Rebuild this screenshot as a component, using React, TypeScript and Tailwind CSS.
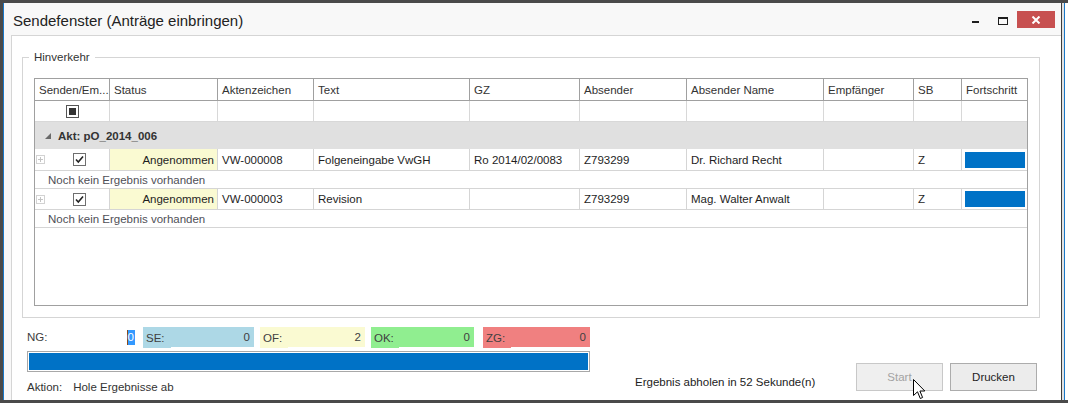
import React from "react";

const COLS =
  "grid grid-cols-[75px_108px_96px_156px_110px_107px_137px_90px_48px_65px]";

const headers = [
  "Senden/Em...",
  "Status",
  "Aktenzeichen",
  "Text",
  "GZ",
  "Absender",
  "Absender Name",
  "Empfänger",
  "SB",
  "Fortschritt",
];

type Row = {
  az: string;
  text: string;
  gz: string;
  abs: string;
  name: string;
  sb: string;
  h: string;
  barTop: string;
};

const rows: Row[] = [
  {
    az: "VW-000008",
    text: "Folgeneingabe VwGH",
    gz: "Ro 2014/02/0083",
    abs: "Z793299",
    name: "Dr. Richard Recht",
    sb: "Z",
    h: "h-[22px]",
    barTop: "pt-[3px]",
  },
  {
    az: "VW-000003",
    text: "Revision",
    gz: "",
    abs: "Z793299",
    name: "Mag. Walter Anwalt",
    sb: "Z",
    h: "h-[21px]",
    barTop: "pt-[2px]",
  },
];

function CheckBox() {
  return (
    <div className="w-[13px] h-[13px] border border-[#6f6f6f] bg-white flex items-center justify-center">
      <svg width="11" height="11" viewBox="0 0 11 11">
        <path d="M2 5.5 L4.3 8 L9 2.5" fill="none" stroke="#222" strokeWidth="1.6" />
      </svg>
    </div>
  );
}

function Expander() {
  return (
    <div className="w-[9px] h-[9px] border border-[#d2d2d2] flex items-center justify-center">
      <svg width="7" height="7" viewBox="0 0 7 7">
        <path d="M3.5 1 V6 M1 3.5 H6" stroke="#c4c4c4" strokeWidth="1" />
      </svg>
    </div>
  );
}

function Counter({
  label,
  value,
  bg,
  w,
  ml,
}: {
  label: string;
  value: string;
  bg: string;
  w: string;
  ml: string;
}) {
  return (
    <div className={`flex items-start h-[21px] ${w} ${ml}`}>
      <div className={`w-[28px] h-[21px] ${bg} pl-[3px] flex items-center text-[#404040]`}>
        {label}
      </div>
      <div className={`flex-1 h-[20px] ${bg} pr-[4px] flex items-center justify-end text-[#404040]`}>
        {value}
      </div>
    </div>
  );
}

export default function App() {
  return (
    <div className="w-[1068px] h-[403px] overflow-hidden relative flex border-t-[3px] border-b-[3px] border-l-[3px] border-[#4a4a4a] font-['Liberation_Sans',Arial,sans-serif] text-[11.5px] leading-[14px] text-[#1e1e1e]">
      {/* Window */}
      <div className="w-[1059px] h-full flex flex-col border-l border-l-[#1a78c8] border-r border-r-[#3c3c3c] bg-[#f8f8f8]">
        {/* Title bar */}
        <div className="h-[32px] flex items-start pl-[9px] shrink-0">
          <div className="pt-[9px] text-[15px] leading-[18px] text-[#222]">
            Sendefenster (Anträge einbringen)
          </div>
          <div className="ml-auto mr-[6px] flex items-start">
            <div className="mt-[18px] w-[7px] h-[2px] bg-[#1e1e1e] mr-[19px]" />
            <div className="mt-[14px] w-[10px] h-[8px] border border-[#1e1e1e] border-t-2 mr-[9px]" />
            <div className="mt-[8px] w-[38px] h-[17px] bg-[#c75050] flex items-center justify-center">
              <svg width="10" height="8" viewBox="0 0 10 8">
                <path d="M1.5 0.5 L8.5 7.5 M8.5 0.5 L1.5 7.5" stroke="#fff" strokeWidth="2" />
              </svg>
            </div>
          </div>
        </div>

        {/* Body */}
        <div className="flex-1 flex">
          <div className="w-[7px] shrink-0" />
          <div className="flex-1 border-l border-t border-[#d5d5d5] bg-white flex flex-col">
            {/* Group box */}
            <div className="ml-[10px] mt-[21px] w-[1018px] h-[261px] border border-[#d5d5d5] relative pt-[20px] pl-[11px] shrink-0">
              <span className="absolute left-[6px] top-[-8px] bg-white px-[5px] text-[#333] leading-[14px]">
                Hinverkehr
              </span>

              {/* Table */}
              <div className="w-[994px] h-[228px] border border-[#a0a0a0] flex flex-col bg-white">
                {/* Header */}
                <div className={`${COLS} h-[22px] border-b border-[#a0a0a0]`}>
                  {headers.map((h, i) => (
                    <div
                      key={h}
                      className={`flex items-center pl-[4px] whitespace-nowrap overflow-hidden text-[#333] ${
                        i < headers.length - 1 ? "border-r border-[#a0a0a0]" : ""
                      }`}
                    >
                      {h}
                    </div>
                  ))}
                </div>
                {/* Filter row */}
                <div className={`${COLS} h-[21px] border-b border-[#d8d8d8]`}>
                  {headers.map((h, i) => (
                    <div
                      key={h}
                      className={`flex items-center justify-center ${
                        i < headers.length - 1 ? "border-r border-[#d8d8d8]" : ""
                      }`}
                    >
                      {i === 0 && (
                        <div className="w-[13px] h-[13px] border border-[#555] bg-white flex items-center justify-center">
                          <div className="w-[7px] h-[7px] bg-[#333]" />
                        </div>
                      )}
                    </div>
                  ))}
                </div>
                {/* Group row */}
                <div className="h-[27px] bg-[#e0e0e0] flex items-center pl-[10px]">
                  <svg width="6" height="6" viewBox="0 0 6 6">
                    <polygon points="6,0 6,6 0,6" fill="#6a6a6a" />
                  </svg>
                  <span className="ml-[7px] font-bold text-[#333]">Akt: pO_2014_006</span>
                </div>
                {rows.map((r) => (
                  <React.Fragment key={r.az}>
                    <div className={`${COLS} ${r.h} border-b border-[#d5d5d5]`}>
                      <div className="flex items-center border-r border-[#d5d5d5] pl-[1px]">
                        <Expander />
                        <div className="ml-[28px]">
                          <CheckBox />
                        </div>
                      </div>
                      <div className="flex items-center justify-end pr-[3px] bg-[#fafad2] border-r border-[#d5d5d5]">
                        Angenommen
                      </div>
                      <div className="flex items-center pl-[4px] border-r border-[#d5d5d5]">{r.az}</div>
                      <div className="flex items-center pl-[4px] border-r border-[#d5d5d5]">{r.text}</div>
                      <div className="flex items-center pl-[4px] border-r border-[#d5d5d5]">{r.gz}</div>
                      <div className="flex items-center pl-[4px] border-r border-[#d5d5d5]">{r.abs}</div>
                      <div className="flex items-center pl-[4px] border-r border-[#d5d5d5]">{r.name}</div>
                      <div className="flex items-center pl-[4px] border-r border-[#d5d5d5]" />
                      <div className="flex items-center pl-[4px] border-r border-[#d5d5d5]">{r.sb}</div>
                      <div className={`pl-[3px] ${r.barTop}`}>
                        <div className="w-[60px] h-[16px] bg-[#0072c6]" />
                      </div>
                    </div>
                    <div className="h-[18px] border-b border-[#d5d5d5] flex items-center pl-[13px] text-[#4f4f57]">
                      Noch kein Ergebnis vorhanden
                    </div>
                  </React.Fragment>
                ))}
                <div className="flex-1" />
              </div>
            </div>

            {/* Bottom area */}
            <div className="flex items-start">
              <div className="ml-[15px] w-[563px] pt-[9px] shrink-0">
                <div className="flex items-start h-[21px]">
                  <div className="w-[108px] h-[20px] flex items-center text-[#404040]">
                    <span>NG:</span>
                    <span className="ml-auto h-[15px] flex items-center bg-[#3399ff] text-white border-l border-[#8a4a1a] pr-[1px]">
                      0
                    </span>
                  </div>
                  <Counter label="SE:" value="0" bg="bg-[#add8e6]" w="w-[111px]" ml="ml-[8px]" />
                  <Counter label="OF:" value="2" bg="bg-[#fafad2]" w="w-[105px]" ml="ml-[6px]" />
                  <Counter label="OK:" value="0" bg="bg-[#90ee90]" w="w-[103px]" ml="ml-[6px]" />
                  <Counter label="ZG:" value="0" bg="bg-[#f08080]" w="w-[107px]" ml="ml-[9px]" />
                </div>
                <div className="mt-[3px] h-[21px] border border-[#a8a8a8] p-[1px]">
                  <div className="w-full h-full bg-[#0072c6]" />
                </div>
                <div className="mt-[8px] flex text-[#333]">
                  <span>Aktion:</span>
                  <span className="ml-[11px]">Hole Ergebnisse ab</span>
                </div>
              </div>
              <div className="ml-[45px] mt-[57px] whitespace-nowrap text-[#222]">
                Ergebnis abholen in 52 Sekunde(n)
              </div>
              <div className="ml-auto mr-[24px] mt-[45px] flex gap-[7px]">
                <div className="w-[87px] h-[28px] border border-[#c8c8c8] bg-[#efefef] flex items-center justify-center text-[#a3a3a3]">
                  Start
                </div>
                <div className="w-[87px] h-[28px] border border-[#acacac] bg-[#ececec] flex items-center justify-center text-[#1e1e1e]">
                  Drucken
                </div>
              </div>
            </div>
          </div>
        </div>
      </div>

      {/* Right strip (window behind) */}
      <div className="flex-1 flex h-full">
        <div className="w-[2px] bg-[#e2e2e2]" />
        <div className="w-[1px] bg-[#1a78c8]" />
        <div className="flex-1 bg-white" />
      </div>

      {/* Mouse cursor */}
      <svg
        className="absolute left-[910px] top-[376px]"
        width="13"
        height="21"
        viewBox="0 0 13 21"
      >
        <path
          d="M0.5 0.5 L0.5 16.5 L4.5 12.8 L7.3 19.5 L9.6 18.5 L6.9 12 L11.8 12 Z"
          fill="#fff"
          stroke="#000"
          strokeWidth="1"
          strokeLinejoin="miter"
        />
      </svg>
    </div>
  );
}
